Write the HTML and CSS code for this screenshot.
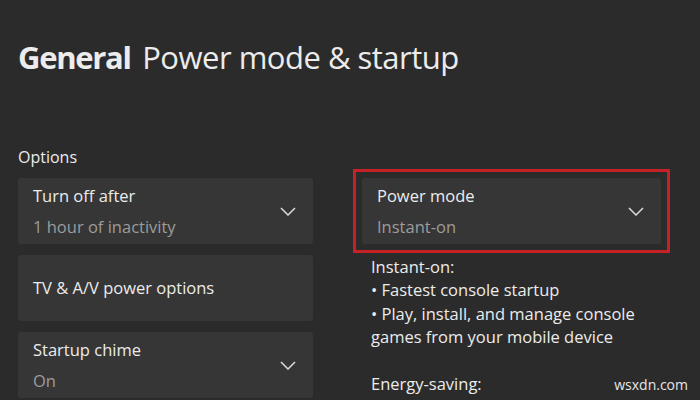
FILE: index.html
```html
<!DOCTYPE html>
<html lang="en">
<head>
    <meta charset="UTF-8">
    <meta name="viewport" content="width=device-width, initial-scale=1.0">
    <title>General - Power mode &amp; startup</title>
    <link rel="stylesheet" href="styles.css">
</head>
<body>
    <div class="page">
        <h1 class="page-title"><b>General</b> Power mode &amp; startup</h1>
        <div class="columns">
            <div class="col-left">
                <div class="section-label">Options</div>
                <div class="card">
                    <div class="card-text">
                        <div class="card-title">Turn off after</div>
                        <div class="card-value">1 hour of inactivity</div>
                    </div>
                    <svg class="chevron" width="16" height="9" viewBox="0 0 16 9"><path d="M1 1l7 7 7-7" fill="none" stroke="#dcdcdc" stroke-width="1.5"/></svg>
                </div>
                <div class="card single">
                    <div class="card-title">TV &amp; A/V power options</div>
                </div>
                <div class="card">
                    <div class="card-text">
                        <div class="card-title">Startup chime</div>
                        <div class="card-value">On</div>
                    </div>
                    <svg class="chevron" width="16" height="9" viewBox="0 0 16 9"><path d="M1 1l7 7 7-7" fill="none" stroke="#dcdcdc" stroke-width="1.5"/></svg>
                </div>
            </div>
            <div class="col-right">
                <div class="highlight">
                    <div class="card">
                        <div class="card-text">
                            <div class="card-title">Power mode</div>
                            <div class="card-value">Instant-on</div>
                        </div>
                        <svg class="chevron" width="16" height="9" viewBox="0 0 16 9"><path d="M1 1l7 7 7-7" fill="none" stroke="#dcdcdc" stroke-width="1.5"/></svg>
                    </div>
                </div>
                <div class="description">
                    <p>Instant-on:<br>
                    &bull; Fastest console startup<br>
                    &bull; Play, install, and manage console games from your mobile device</p>
                    <p>Energy-saving:</p>
                </div>
            </div>
        </div>
    </div>
    <div class="watermark">wsxdn.com</div>
</body>
</html>
```

FILE: styles.css
```css
body {
    margin: 0;
    background-color: #2b2b2b;
    color: #ececec;
    font-family: "Open Sans", "Noto Sans", sans-serif;
    height: 400px;
    overflow: hidden;
    position: relative;
}

.page {
    padding: 0 18px;
}

.page-title {
    margin: 0;
    padding-top: 36px;
    font-size: 31px;
    line-height: 42px;
    font-weight: 400;
    letter-spacing: -0.5px;
    color: #ececec;
}

.page-title b {
    font-weight: 700;
    letter-spacing: -1.3px;
    margin-right: 4px;
}

.columns {
    display: flex;
    gap: 40px;
    margin-top: 68px;
    align-items: flex-start;
}

.col-left {
    width: 295px;
}

.section-label {
    font-size: 16px;
    line-height: 22px;
    margin-bottom: 10px;
}

.card {
    display: flex;
    align-items: center;
    justify-content: space-between;
    background-color: #363636;
    border-radius: 3px;
    height: 66px;
    box-sizing: border-box;
    padding: 0 17px 0 15px;
    margin-bottom: 11px;
}

.card-title {
    font-size: 16.5px;
    line-height: 24px;
}

.card-value {
    font-size: 16.5px;
    line-height: 24px;
    margin-top: 7px;
    color: #9c9c9c;
}

.col-right {
    margin-top: 23px;
    width: 317px;
}

.highlight {
    border: 3px solid #c62226;
    padding: 6px;
}

.highlight .card {
    margin-bottom: 0;
}

.description {
    padding-left: 18px;
    padding-top: 2px;
    font-size: 16.5px;
    line-height: 23.3px;
}

.description p {
    margin: 0 0 24px;
}

.watermark {
    position: absolute;
    right: 12px;
    bottom: 6px;
    font-size: 14px;
    color: #e6e6e6;
}
```
